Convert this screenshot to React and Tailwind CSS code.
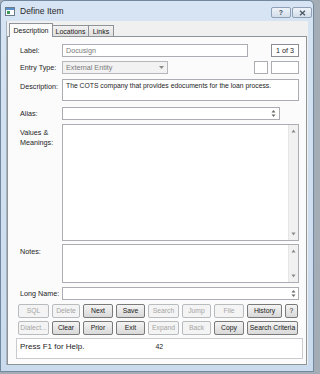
import React from "react";

function Spin() {
  return (
    <svg width="5" height="9" viewBox="0 0 5 9" className="shrink-0">
      <path d="M0.5 3.5 L2.5 1 L4.5 3.5 Z" fill="#6b6b6b" />
      <path d="M0.5 5.5 L2.5 8 L4.5 5.5 Z" fill="#6b6b6b" />
    </svg>
  );
}

function Up() {
  return (
    <svg width="5" height="4" viewBox="0 0 5 4">
      <path d="M0.5 3.5 L2.5 0.5 L4.5 3.5 Z" fill="#8a8a8a" />
    </svg>
  );
}
function Down() {
  return (
    <svg width="5" height="4" viewBox="0 0 5 4">
      <path d="M0.5 0.5 L2.5 3.5 L4.5 0.5 Z" fill="#8a8a8a" />
    </svg>
  );
}

function Btn({ children, on, className = "" }) {
  return (
    <div
      className={
        "h-[14px] flex items-center justify-center rounded-[2px] border text-[6.8px] leading-none whitespace-nowrap overflow-hidden " +
        (on
          ? "border-[#7a7a7a] bg-gradient-to-b from-[#f4f4f4] to-[#d9d9d9] text-[#1a1a1a]"
          : "border-[#b9bcbf] bg-[#f4f4f4] text-[#a5a5a5]") +
        " " +
        className
      }
    >
      {children}
    </div>
  );
}

function ScrollTA({ h }) {
  return (
    <div className={"w-[237px] border border-[#abadb3] bg-white flex justify-end " + h}>
      <div className="w-[10px] h-full bg-[#f1f1f1] border-l border-[#e6e6e6] flex flex-col items-center justify-between py-[4px]">
        <Up />
        <Down />
      </div>
    </div>
  );
}

export default function App() {
  return (
    <div className="w-[320px] h-[374px] bg-[#a4adb5] overflow-hidden font-['Liberation_Sans',Arial,sans-serif]">
      <div className="w-[314px] h-[372px] bg-gradient-to-b from-[#d6e4f3] to-[#cadbee] border border-[#71889f] rounded-t-[5px] flex flex-col">
        {/* title bar */}
        <div className="h-[20px] shrink-0 flex items-center pl-[4px] pr-[1px]">
          <svg width="10" height="9" viewBox="0 0 10 9" className="mr-[5px]">
            <rect x="0.5" y="0.5" width="9" height="8" fill="#ffffff" stroke="#6c7c8c" />
            <rect x="1" y="1" width="8" height="2" fill="#5b8fc7" />
            <rect x="2" y="4" width="3" height="3" fill="#3c9a5a" />
          </svg>
          <span className="text-[8.5px] text-[#2a2a2a]">Define Item</span>
          <div className="ml-auto flex gap-[1px] self-start mt-[6px]">
            <div className="w-[20px] h-[11px] rounded-[2px] border border-[#8fa1b6] bg-gradient-to-b from-[#eef3f9] to-[#d3deea] flex items-center justify-center text-[7px] font-bold text-[#3f4d5c] leading-none">
              ?
            </div>
            <div className="w-[20px] h-[11px] rounded-[2px] border border-[#8fa1b6] bg-gradient-to-b from-[#eef3f9] to-[#d3deea] flex items-center justify-center">
              <svg width="7" height="6" viewBox="0 0 7 6">
                <path d="M1 0.8 L6 5.2 M6 0.8 L1 5.2" stroke="#4a5866" strokeWidth="1.3" />
              </svg>
            </div>
          </div>
        </div>

        {/* client area */}
        <div className="mx-[5px] h-[344px] bg-[#f0f0f0] border-l border-[#a8b4c0] flex flex-col pt-[2px]">
          {/* tabs */}
          <div className="h-[14px] flex items-end pl-[2px] relative z-10 text-[7px] leading-none text-[#1a1a1a]">
            <div className="h-[14px] w-[44px] bg-[#fbfbfb] border border-b-0 border-[#8e9398] flex items-center justify-center">
              Description
            </div>
            <div className="h-[12px] w-[36px] bg-gradient-to-b from-[#f2f2f2] to-[#e0e0e0] border border-l-0 border-[#8e9398] flex items-center justify-center">
              Locations
            </div>
            <div className="h-[12px] w-[25px] bg-gradient-to-b from-[#f2f2f2] to-[#e0e0e0] border border-l-0 border-[#8e9398] flex items-center justify-center">
              Links
            </div>
          </div>
          {/* panel */}
          <div className="-mt-[1px] mr-[1px] h-[329px] bg-[#fbfbfb] border border-[#8e9398] flex flex-col pt-[7px] text-[7.2px] leading-none text-[#1e1e1e]">
            {/* Label row */}
            <div className="h-[13px] flex items-center pl-[12px]">
              <div className="w-[42px]">Label:</div>
              <div className="w-[186px] h-full border border-[#abadb3] bg-white flex items-center pl-[3px] text-[#7a7a7a]">
                Docusign
              </div>
              <div className="ml-[23px] w-[28px] h-full border border-[#8a8d91] bg-white flex items-center justify-center">
                1 of 3
              </div>
            </div>
            {/* Entry type */}
            <div className="h-[13px] mt-[4px] flex items-center pl-[12px]">
              <div className="w-[42px] whitespace-nowrap">Entry Type:</div>
              <div className="w-[106px] h-full border border-[#b5b7ba] bg-[#f2f2f2] flex items-center pl-[3px] pr-[3px] text-[#7a7a7a]">
                <span>External Entity</span>
                <svg width="5" height="3" viewBox="0 0 5 3" className="ml-auto">
                  <path d="M0 0 L5 0 L2.5 3 Z" fill="#8a8a8a" />
                </svg>
              </div>
              <div className="ml-[86px] w-[14px] h-full border border-[#abadb3] bg-white" />
              <div className="ml-[3px] w-[28px] h-full border border-[#abadb3] bg-white" />
            </div>
            {/* Description */}
            <div className="h-[22px] mt-[5px] flex pl-[12px]">
              <div className="w-[42px] pt-[4px]">Description:</div>
              <div className="w-[237px] h-full border border-[#abadb3] bg-white pl-[3px] pt-[3px] text-[6.8px] whitespace-nowrap">
                The COTS company that provides edocuments for the loan process.
              </div>
            </div>
            {/* Alias */}
            <div className="h-[13px] mt-[6px] flex items-center pl-[12px]">
              <div className="w-[42px]">Alias:</div>
              <div className="w-[218px] h-full border border-[#abadb3] bg-white flex items-center justify-end pr-[3px]">
                <Spin />
              </div>
            </div>
            {/* Values & Meanings */}
            <div className="h-[117px] mt-[4px] flex pl-[12px]">
              <div className="w-[42px] pt-[4px] leading-[10px]">
                Values &amp;
                <br />
                Meanings:
              </div>
              <ScrollTA h="h-full" />
            </div>
            {/* Notes */}
            <div className="h-[39px] mt-[3px] flex pl-[12px]">
              <div className="w-[42px] pt-[4px]">Notes:</div>
              <ScrollTA h="h-full" />
            </div>
            {/* Long name */}
            <div className="h-[13px] mt-[4px] flex items-center pl-[12px]">
              <div className="w-[42px] whitespace-nowrap">Long Name:</div>
              <div className="w-[237px] h-full border border-[#abadb3] bg-white flex items-center justify-end pr-[2px]">
                <Spin />
              </div>
            </div>
            {/* buttons */}
            <div className="mt-[4px] pl-[10px] grid grid-cols-[31px_28px_30px_29px_31px_29px_30px_35px_13px] gap-x-[3px] gap-y-[3px]">
              <Btn>SQL</Btn>
              <Btn>Delete</Btn>
              <Btn on>Next</Btn>
              <Btn on>Save</Btn>
              <Btn>Search</Btn>
              <Btn>Jump</Btn>
              <Btn>File</Btn>
              <Btn on>History</Btn>
              <Btn on>?</Btn>
              <Btn className="text-[6.3px]">Dialect...</Btn>
              <Btn on>Clear</Btn>
              <Btn on>Prior</Btn>
              <Btn on>Exit</Btn>
              <Btn>Expand</Btn>
              <Btn>Back</Btn>
              <Btn on>Copy</Btn>
              <Btn on className="col-span-2">Search Criteria</Btn>
            </div>
            {/* status */}
            <div className="mt-[3px] ml-[8px] w-[287px] h-[21px] border border-[#c9cbce] bg-white flex items-start pt-[4px] pl-[3px] text-[8px] text-[#1e1e1e]">
              <span>Press F1 for Help.</span>
              <span className="ml-[71px] text-[7px]">42</span>
            </div>
          </div>
        </div>
      </div>
    </div>
  );
}
